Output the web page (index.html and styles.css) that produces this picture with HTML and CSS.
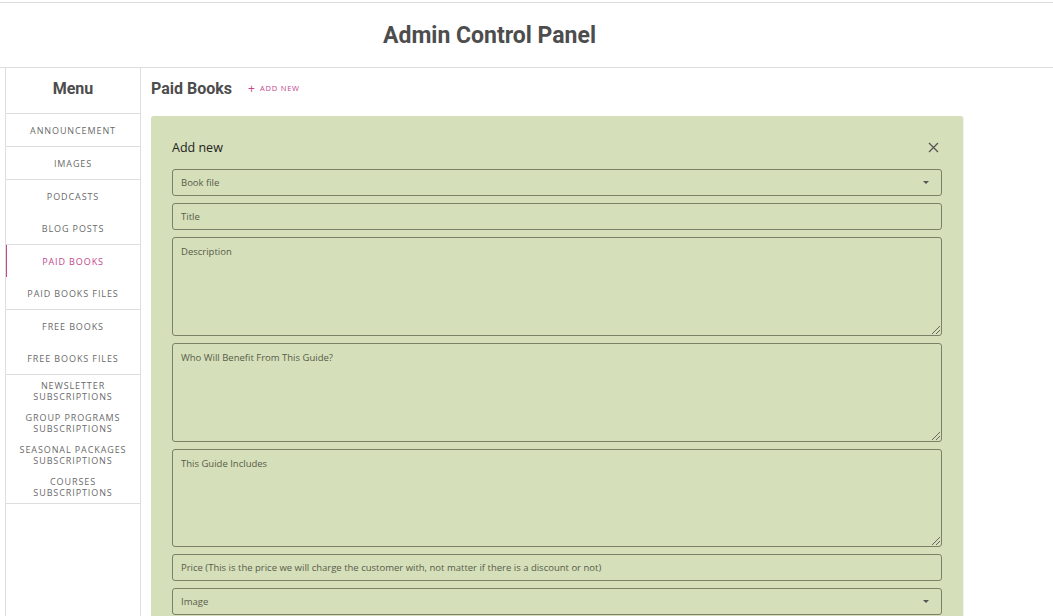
FILE: index.html
```html
<!DOCTYPE html>
<html>
<head>
<meta charset="utf-8">
<link rel="stylesheet" href="styles.css">
</head>
<body>
<header class="topbar">
  <h1 class="title">Admin Control Panel</h1>
</header>
<div class="layout">
  <nav class="sidebar">
    <div class="menu-title">Menu</div>
    <div class="group"><a class="item">ANNOUNCEMENT</a></div>
    <div class="group"><a class="item">IMAGES</a></div>
    <div class="group"><a class="item">PODCASTS</a><a class="item">BLOG POSTS</a></div>
    <div class="group"><a class="item active">PAID BOOKS</a><a class="item">PAID BOOKS FILES</a></div>
    <div class="group"><a class="item">FREE BOOKS</a><a class="item">FREE BOOKS FILES</a></div>
    <div class="group">
      <a class="item two">NEWSLETTER<br>SUBSCRIPTIONS</a>
      <a class="item two">GROUP PROGRAMS<br>SUBSCRIPTIONS</a>
      <a class="item two">SEASONAL PACKAGES<br>SUBSCRIPTIONS</a>
      <a class="item two">COURSES<br>SUBSCRIPTIONS</a>
    </div>
  </nav>
  <main class="main">
    <div class="page-head">
      <h2 class="page-title">Paid Books</h2>
      <a class="add-link"><span class="plus">+</span>ADD NEW</a>
    </div>
    <section class="panel">
      <div class="panel-head">
        <span class="panel-title">Add new</span>
        <svg class="close" width="11" height="11" viewBox="0 0 11 11"><path d="M1 1L10 10M10 1L1 10" stroke="#555" stroke-width="1.3"/></svg>
      </div>
      <div class="field select"><span>Book file</span><span class="caret"></span></div>
      <div class="field"><span>Title</span></div>
      <div class="field area tall"><span>Description</span><span class="grip"></span></div>
      <div class="field area tall"><span>Who Will Benefit From This Guide?</span><span class="grip"></span></div>
      <div class="field area"><span>This Guide Includes</span><span class="grip"></span></div>
      <div class="field after-area"><span>Price (This is the price we will charge the customer with, not matter if there is a discount or not)</span></div>
      <div class="field select"><span>Image</span><span class="caret"></span></div>
    </section>
  </main>
</div>
</body>
</html>
```
FILE: styles.css
```css
html, body { margin: 0; padding: 0; background: #fff; }
body { overflow: hidden; height: 616px; }
.topbar {
  margin-top: 2px;
  border-top: 1px solid #dedede;
  border-bottom: 1px solid #dedede;
  height: 64px;
  display: flex;
  align-items: center;
  justify-content: center;
  padding-right: 74px;
}
.title {
  margin: 0;
  font-family: Roboto, sans-serif;
  font-weight: 700;
  font-size: 23px;
  color: #4d4d4d;
}
.layout { display: flex; padding-left: 5px; }
.sidebar {
  width: 134px;
  border-left: 1px solid #dedede;
  border-right: 1px solid #dedede;
  height: 560px;
  flex-shrink: 0;
}
.menu-title {
  height: 45px;
  line-height: 42px;
  text-align: center;
  font-family: Roboto, sans-serif;
  font-weight: 700;
  font-size: 16px;
  color: #4d4d4d;
  border-bottom: 1px solid #dedede;
}
.group { border-bottom: 1px solid #dedede; }
.item {
  display: flex;
  align-items: center;
  justify-content: center;
  text-align: center;
  height: 32px;
  font-family: "Open Sans", sans-serif;
  font-size: 9px;
  letter-spacing: 0.9px;
  color: #6a6a6a;
  line-height: 11px;
}
.item.active { color: #c2478e; box-shadow: inset 1px 0 0 #c2478e; }
.main { flex: 1; padding-left: 10px; }
.page-head { display: flex; align-items: center; height: 40px; }
.page-title {
  margin: 0;
  font-family: Roboto, sans-serif;
  font-weight: 700;
  font-size: 16px;
  color: #4d4d4d;
}
.add-link {
  margin-left: 16px;
  font-family: "Open Sans", sans-serif;
  font-size: 7.5px;
  letter-spacing: 0.8px;
  color: #c2478e;
  display: flex;
  align-items: center;
}
.plus { font-size: 12px; margin-right: 5px; letter-spacing: 0; }
.panel {
  width: 770px;
  background: #d5dfb9;
  border-radius: 3px;
  padding: 20px 21px;
  margin-top: 8px;
  box-shadow: 1px 0 1px rgba(0,0,0,0.06);
}
.panel-head {
  height: 22px;
  display: flex;
  align-items: center;
  justify-content: space-between;
  margin-bottom: 11px;
}
.panel-title { font-family: "Open Sans", sans-serif; font-size: 12.5px; color: #222; }
.close { margin-right: 3px; }
.field {
  position: relative;
  box-sizing: border-box;
  height: 27px;
  border: 1px solid #7c8068;
  border-radius: 3px;
  margin-bottom: 7px;
  padding: 0 8px;
  display: flex;
  align-items: center;
  justify-content: space-between;
  font-family: "Open Sans", sans-serif;
  font-size: 9.5px;
  color: #585c4b;
}
.field.area { height: 98px; align-items: flex-start; padding-top: 7px; margin-bottom: 7px; }
.field.area.tall { height: 99px; }
.caret {
  width: 0; height: 0;
  border-left: 3.5px solid transparent;
  border-right: 3.5px solid transparent;
  border-top: 3.5px solid #555;
  margin-right: 4px;
}
.grip {
  position: absolute;
  right: 1px;
  bottom: 1px;
  width: 8px;
  height: 8px;
  background: linear-gradient(135deg, transparent 45%, #666 45%, #666 52%, transparent 52%, transparent 70%, #666 70%, #666 77%, transparent 77%);
}
```
